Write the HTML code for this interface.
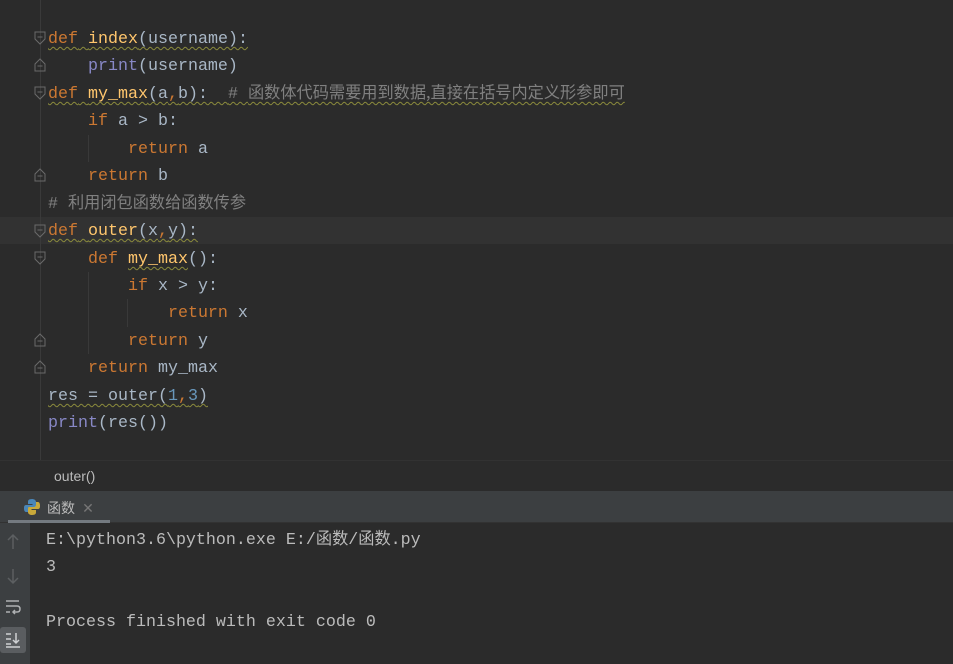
<!DOCTYPE html>
<html><head><meta charset="utf-8"><style>
*{margin:0;padding:0;box-sizing:border-box}
body{width:953px;height:664px;background:#2b2b2b;overflow:hidden;position:relative;font-family:"Liberation Mono","Noto Sans CJK SC",monospace;}
.ed{position:absolute;left:0;top:0;width:953px;height:460px;background:#2b2b2b}
.gl{position:absolute;left:40px;top:0;width:1px;height:460px;background:#3a3a3a}
.cur{position:absolute;left:0;top:217px;width:953px;height:27px;background:#323232}
.ln{position:absolute;left:48px;font-size:16.67px;line-height:27px;height:27px;color:#a9b7c6;white-space:pre;margin-top:1px}
.k{color:#cc7832}.f{color:#ffc66d}.b{color:#8888c6}.c{color:#808080}.n{color:#6897bb}
.cj{font-family:"Noto Sans CJK SC",sans-serif;font-size:16.2px;line-height:1}
.w{text-decoration:underline wavy #8b8b3c;text-decoration-thickness:1px;text-underline-offset:3px}
.fold{position:absolute;left:34px;width:12px;height:14px}
.ig{position:absolute;width:1px;background:#393939}
.bc{position:absolute;left:0;top:460px;width:953px;height:31px;background:#2b2b2b;border-top:1px solid #323232;font-family:"Liberation Sans",sans-serif;font-size:14px;color:#bbb;padding:7px 0 0 54px}
.tw{position:absolute;left:0;top:491px;width:953px;height:32px;background:#3c3f41;border-bottom:1px solid #323232}
.tab{position:absolute;left:24px;top:7px;font-family:"Noto Sans CJK SC",sans-serif;font-size:14px;color:#bbb}
.tabu{position:absolute;left:8px;top:29px;width:102px;height:3px;background:#747a80}
.side{position:absolute;left:0;top:523px;width:30px;height:141px;background:#3c3f41}
.out{position:absolute;left:46px;font-size:16.67px;color:#bbbbbb;white-space:pre;line-height:27px;height:27px}
</style></head><body>
<div class="ed">
<div class="cur"></div>
<div class="gl"></div>
<div class="ig" style="left:88px;top:135px;height:27px"></div>
<div class="ig" style="left:88px;top:272px;height:82px"></div>
<div class="ig" style="left:127px;top:299px;height:28px"></div>
<svg class="fold" style="top:31px" viewBox="0 0 12 14"><path d="M1 1H11V8L6 13L1 8Z M3.5 6H8.5" fill="none" stroke="#6a6a6a"/></svg>
<svg class="fold" style="top:58px" viewBox="0 0 12 14"><path d="M1 13H11V6L6 1L1 6Z M3.5 8H8.5" fill="none" stroke="#6a6a6a"/></svg>
<svg class="fold" style="top:86px" viewBox="0 0 12 14"><path d="M1 1H11V8L6 13L1 8Z M3.5 6H8.5" fill="none" stroke="#6a6a6a"/></svg>
<svg class="fold" style="top:168px" viewBox="0 0 12 14"><path d="M1 13H11V6L6 1L1 6Z M3.5 8H8.5" fill="none" stroke="#6a6a6a"/></svg>
<svg class="fold" style="top:224px" viewBox="0 0 12 14"><path d="M1 1H11V8L6 13L1 8Z M3.5 6H8.5" fill="none" stroke="#6a6a6a"/></svg>
<svg class="fold" style="top:251px" viewBox="0 0 12 14"><path d="M1 1H11V8L6 13L1 8Z M3.5 6H8.5" fill="none" stroke="#6a6a6a"/></svg>
<svg class="fold" style="top:333px" viewBox="0 0 12 14"><path d="M1 13H11V6L6 1L1 6Z M3.5 8H8.5" fill="none" stroke="#6a6a6a"/></svg>
<svg class="fold" style="top:360px" viewBox="0 0 12 14"><path d="M1 13H11V6L6 1L1 6Z M3.5 8H8.5" fill="none" stroke="#6a6a6a"/></svg>
<div class="ln" style="top:25px"><span class="w"><span class="k">def</span> <span class="f">index</span>(username):</span></div>
<div class="ln" style="top:52px">    <span class="b">print</span>(username)</div>
<div class="ln" style="top:80px"><span class="w"><span class="k">def</span> <span class="f">my_max</span>(a<span class="k">,</span>b):  <span class="c"># <span class="cj">函数体代码需要用到数据,直接在括号内定义形参即可</span></span></span></div>
<div class="ln" style="top:107px">    <span class="k">if</span> a &gt; b:</div>
<div class="ln" style="top:135px">        <span class="k">return</span> a</div>
<div class="ln" style="top:162px">    <span class="k">return</span> b</div>
<div class="ln" style="top:190px"><span class="c"># <span class="cj">利用闭包函数给函数传参</span></span></div>
<div class="ln" style="top:217px"><span class="w"><span class="k">def</span> <span class="f">outer</span>(x<span class="k">,</span>y):</span></div>
<div class="ln" style="top:245px">    <span class="k">def</span> <span class="f w">my_max</span>():</div>
<div class="ln" style="top:272px">        <span class="k">if</span> x &gt; y:</div>
<div class="ln" style="top:299px">            <span class="k">return</span> x</div>
<div class="ln" style="top:327px">        <span class="k">return</span> y</div>
<div class="ln" style="top:354px">    <span class="k">return</span> my_max</div>
<div class="ln" style="top:382px"><span class="w">res = outer(<span class="n">1</span><span class="k">,</span><span class="n">3</span>)</span></div>
<div class="ln" style="top:409px"><span class="b">print</span>(res())</div>
</div>
<div class="bc">outer()</div>
<div class="tw">
<svg style="position:absolute;left:23px;top:7px" width="18" height="18" viewBox="0 0 18 18"><path d="M9 1C5 1 5 3 5 4V6H9.5V7H3C1 7 1 9 1 10.5S1.5 14 3 14H5V11.5C5 10 6 9 7.5 9H11.5C13 9 13 8 13 6.5V4C13 2 11 1 9 1Z" fill="#4a86b8"/><path d="M9 17C13 17 13 15 13 14V12H8.5V11H15C17 11 17 9 17 7.5S16.5 4 15 4H13V6.5C13 8 12 9 10.5 9H6.5C5 9 5 10 5 11.5V14C5 16 7 17 9 17Z" fill="#c9a93a"/></svg>
<div class="tab" style="left:47px">函数 <span style="color:#777;font-family:'DejaVu Sans',sans-serif;margin-left:4px">✕</span></div>
<div class="tabu"></div>
</div>
<div class="side">
<svg style="position:absolute;left:5px;top:10px" width="16" height="120" viewBox="0 0 16 120">
<path d="M8 2V16M3 7L8 2L13 7" fill="none" stroke="#5c5f61" stroke-width="1.5"/>
<path d="M8 36V50M3 45L8 50L13 45" fill="none" stroke="#5c5f61" stroke-width="1.5"/>
<path d="M1 68H14M1 73H12Q15 73 15 76Q15 79 12 79H8M10 77L8 79L10 81M1 79H5" fill="none" stroke="#afb1b3" stroke-width="1.5"/>
</svg>
<div style="position:absolute;left:0;top:104px;width:26px;height:26px;background:#5a5d60;border-radius:3px"></div>
<svg style="position:absolute;left:5px;top:108px" width="16" height="18" viewBox="0 0 16 18"><path d="M1 3H6M1 8H6M1 13H6M1 16H15M11 2V12M8 9L11 12L14 9" fill="none" stroke="#cfd1d3" stroke-width="1.5"/></svg>
</div>
<div class="out" style="top:527px">E:\python3.6\python.exe E:/<span class="cj">函数</span>/<span class="cj">函数</span>.py</div>
<div class="out" style="top:554px">3</div>
<div class="out" style="top:609px">Process finished with exit code 0</div>
</body></html>
